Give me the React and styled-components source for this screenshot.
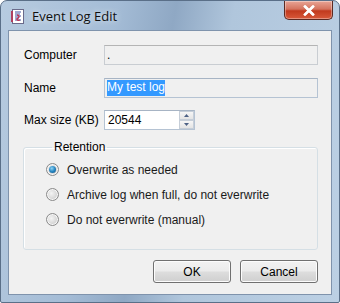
import React from "react";
import styled, { createGlobalStyle } from "styled-components";

const Global = createGlobalStyle`
  html, body { margin: 0; padding: 0; background: #fff; }
  body { width: 340px; height: 303px; overflow: hidden; }
`;

const Window = styled.div`
  width: 340px;
  height: 303px;
  box-sizing: border-box;
  display: flex;
  flex-direction: column;
  border: 1px solid #5a6f88;
  border-radius: 7px 7px 2px 2px;
  background: linear-gradient(100deg, #b7cbe0 0%, #a4bcd6 30%, #8fa8c4 45%, #b0c6dc 60%, #bcd0e4 100%);
  overflow: hidden;
  font-family: "Liberation Sans", Arial, sans-serif;
  font-size: 12px;
  color: #000;
`;

const TitleBar = styled.div`
  height: 29px;
  display: flex;
  align-items: flex-start;
  padding-left: 10px;
  flex-shrink: 0;
`;

const TitleIcon = styled.svg`
  width: 14px;
  height: 15px;
  margin-top: 8px;
`;

const Title = styled.span`
  margin-left: 7px;
  margin-top: 6px;
  font-family: "Open Sans", "Noto Sans", sans-serif;
  font-size: 13px;
  color: #101010;
  text-shadow: 0 0 6px rgba(255,255,255,0.9);
`;

const CloseButton = styled.div`
  margin-left: auto;
  margin-right: 6px;
  width: 49px;
  height: 19px;
  box-sizing: border-box;
  border: 1px solid #5b2a22;
  border-top: none;
  border-radius: 0 0 5px 5px;
  background: linear-gradient(#e8a596 0%, #d4735e 45%, #c13a1e 55%, #d8593a 100%);
  display: flex;
  align-items: center;
  justify-content: center;
  box-shadow: inset 0 0 0 1px rgba(255,255,255,0.35);
`;

const Client = styled.div`
  flex: 1;
  margin: 0 7px 7px 7px;
  background: #f0f0f0;
  border: 1px solid #7f93ac;
  display: flex;
  flex-direction: column;
  padding: 14px 13px 0 15px;
`;

const Form = styled.div`
  display: grid;
  grid-template-columns: 80px 1fr;
  row-gap: 12.5px;
  align-items: center;
`;

const Label = styled.label`
  white-space: nowrap;
`;

const TextBox = styled.div`
  height: 20px;
  box-sizing: border-box;
  border: 1px solid ${p => (p.$disabled ? "#c9cdd2" : "#b5c3d3")};
  border-top-color: ${p => (p.$disabled ? "#b4b4b4" : "#a7b4c4")};
  background: #f0f0f0;
  display: flex;
  align-items: center;
  padding-left: 2px;
`;

const Selected = styled.span`
  background: #3399ff;
  color: #fff;
  padding: 1px 0 2px;
  line-height: 13px;
`;

const SpinWrap = styled.div`
  display: flex;
  align-items: center;
  height: 20px;
  width: 91px;
  box-sizing: border-box;
  border: 1px solid #b5c3d3;
  border-top-color: #a7b4c4;
  background: #fff;
  padding-left: 3px;
`;

const SpinValue = styled.span`
  flex: 1;
`;

const SpinButtons = styled.div`
  display: flex;
  flex-direction: column;
  width: 15px;
  height: 18px;
`;

const SpinButton = styled.div`
  flex: 1;
  box-sizing: border-box;
  border: 1px solid #c6ced8;
  background: linear-gradient(#f6f6f6, #e4e4e4);
  display: flex;
  align-items: center;
  justify-content: center;
`;

const Group = styled.fieldset`
  margin: 10px 0 0 -1px;
  padding: 9px 0 23px 22px;
  border: 1px solid #d5dfe5;
  border-radius: 3px;
  box-shadow: inset 1px 1px 0 #fff;
  display: flex;
  flex-direction: column;
  gap: 12px;
  min-width: 0;
`;

const Legend = styled.legend`
  padding: 0 2px;
  margin-left: 6px;
`;

const RadioRow = styled.div`
  display: flex;
  align-items: center;
  gap: 8px;
  height: 13px;
  color: #1a1a1a;
`;

const RadioDot = styled.span`
  width: 13px;
  height: 13px;
  flex-shrink: 0;
  box-sizing: border-box;
  border-radius: 50%;
  border: 1px solid #8a8a8a;
  background: radial-gradient(circle at 40% 40%, #f4f4f4 0%, #d8d8d8 55%, #c4c4c4 100%);
  box-shadow: inset 0 0 0 1px #f7f7f7;
  display: flex;
  align-items: center;
  justify-content: center;
  &::after {
    content: "";
    display: ${p => (p.$checked ? "block" : "none")};
    width: 7px;
    height: 7px;
    border-radius: 50%;
    background: radial-gradient(circle at 40% 35%, #8fd4f4 0%, #2786c2 50%, #0e4f80 100%);
  }
`;

const ButtonRow = styled.div`
  display: flex;
  justify-content: flex-end;
  gap: 9px;
  margin-top: 10px;
`;

const Button = styled.button`
  width: 78px;
  height: 23px;
  box-sizing: border-box;
  border: 1px solid #707070;
  border-radius: 3px;
  background: linear-gradient(#f2f2f2 0%, #ebebeb 48%, #dddddd 52%, #cfcfcf 100%);
  box-shadow: inset 0 0 0 1px #fcfcfc;
  font-family: "Liberation Sans", Arial, sans-serif;
  font-size: 12px;
  color: #000;
  padding: 0;
`;

export default function App() {
  return (
    <>
      <Global />
      <Window>
        <TitleBar>
          <TitleIcon viewBox="0 0 14 15">
            <rect x="1.5" y="0.5" width="11" height="14" fill="#fff" stroke="#6a6a8a" />
            <rect x="0" y="2" width="2" height="11" fill="#b04060" />
            <path d="M4 3h6M4 5h5M4 7h6M4 9h4M4 11h6" stroke="#4050a0" strokeWidth="1" />
            <path d="M6 6c2 0 3 2 1 3s-1 3 2 2" stroke="#c03050" strokeWidth="1.3" fill="none" />
          </TitleIcon>
          <Title>Event Log Edit</Title>
          <CloseButton>
            <svg width="12" height="11" viewBox="0 0 12 11">
              <path d="M2 1.5l8 8M10 1.5l-8 8" stroke="#fff" strokeWidth="2.6" strokeLinecap="square" />
              <path d="M2 1.5l8 8M10 1.5l-8 8" stroke="#fff" strokeWidth="2" />
            </svg>
          </CloseButton>
        </TitleBar>
        <Client>
          <Form>
            <Label>Computer</Label>
            <TextBox $disabled>.</TextBox>
            <Label>Name</Label>
            <TextBox><Selected>My test log</Selected></TextBox>
            <Label>Max size (KB)</Label>
            <SpinWrap>
              <SpinValue>20544</SpinValue>
              <SpinButtons>
                <SpinButton>
                  <svg width="5" height="3" viewBox="0 0 5 3"><path d="M0 3L2.5 0L5 3z" fill="#4d6185" /></svg>
                </SpinButton>
                <SpinButton>
                  <svg width="5" height="3" viewBox="0 0 5 3"><path d="M0 0L2.5 3L5 0z" fill="#4d6185" /></svg>
                </SpinButton>
              </SpinButtons>
            </SpinWrap>
          </Form>
          <Group>
            <Legend>Retention</Legend>
            <RadioRow><RadioDot $checked />Overwrite as needed</RadioRow>
            <RadioRow><RadioDot />Archive log when full, do not everwrite</RadioRow>
            <RadioRow><RadioDot />Do not everwrite (manual)</RadioRow>
          </Group>
          <ButtonRow>
            <Button>OK</Button>
            <Button>Cancel</Button>
          </ButtonRow>
        </Client>
      </Window>
    </>
  );
}
